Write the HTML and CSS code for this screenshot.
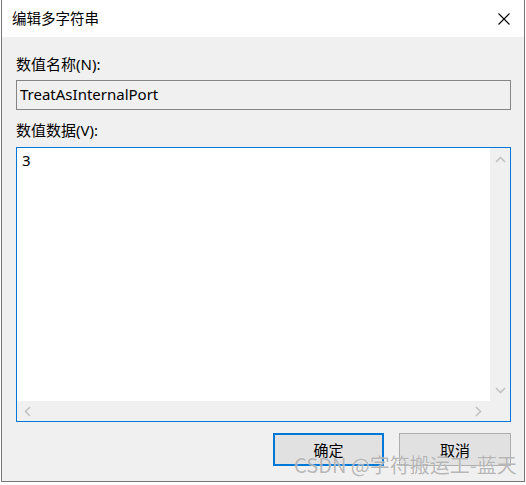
FILE: index.html
```html
<html>
  <head>
    <meta charset="utf-8">
    <link rel="stylesheet" href="styles.css">
    <title>编辑多字符串</title>
  </head>
  <body>
    <div class="window">
      <div class="titlebar">
        <span class="title">编辑多字符串</span>
        <svg class="close" width="12" height="12" viewBox="0 0 12 12">
          <path d="M0.5 0.5 L11.5 11.5 M11.5 0.5 L0.5 11.5" stroke="#000" stroke-width="1.1" fill="none"/>
        </svg>
      </div>

      <div class="content">
        <div class="label label-first">数值名称(N):</div>
        <div class="name-box">TreatAsInternalPort</div>

        <div class="label">数值数据(V):</div>
        <div class="memo">
          <div class="memo-text">3</div>
          <div class="vscroll">
            <svg width="11" height="7" viewBox="0 0 11 7"><polyline points="1,6 5.5,1.5 10,6" fill="none" stroke="#c2c2c2" stroke-width="1.6"/></svg>
            <svg width="11" height="7" viewBox="0 0 11 7"><polyline points="1,1 5.5,5.5 10,1" fill="none" stroke="#c2c2c2" stroke-width="1.6"/></svg>
          </div>
          <div class="hscroll">
            <svg width="7" height="11" viewBox="0 0 7 11"><polyline points="6,1 1.5,5.5 6,10" fill="none" stroke="#c2c2c2" stroke-width="1.6"/></svg>
            <svg width="7" height="11" viewBox="0 0 7 11"><polyline points="1,1 5.5,5.5 1,10" fill="none" stroke="#c2c2c2" stroke-width="1.6"/></svg>
          </div>
          <div class="corner"></div>
        </div>

        <div class="buttons">
          <div class="btn btn-default">确定</div>
          <div class="btn">取消</div>
        </div>
      </div>

      <div class="watermark">CSDN @字符搬运工-蓝天</div>
    </div>
  </body>
</html>
```

FILE: styles.css
```css
body {
  margin: 0;
  background-color: #fff;
  font-family: "Noto Sans", "Noto Sans CJK SC", sans-serif;
  font-size: 15px;
  color: #000;
}
.window {
  position: relative;
  box-sizing: border-box;
  width: 524px;
  height: 482px;
  margin-left: 1px;
  display: flex;
  flex-direction: column;
  border: 1px solid #777;
  border-top: none;
  background-color: #f0f0f0;
}
.titlebar {
  height: 37px;
  flex: none;
  display: flex;
  align-items: center;
  justify-content: space-between;
  padding: 0 14px 0 10px;
  background-color: #fff;
}
.title {
  font-family: "Noto Sans CJK SC", sans-serif;
  font-size: 14.5px;
  line-height: 20px;
  margin-top: -1px;
}
.close {
  display: block;
}
.content {
  flex: 1;
  display: flex;
  flex-direction: column;
  padding: 0 13px 0 14px;
}
.label {
  height: 20px;
  line-height: 20px;
  margin-top: 10px;
  font-family: "Noto Sans", "Noto Sans CJK SC", sans-serif;
}
.label-first {
  margin-top: 17px;
}
.name-box {
  box-sizing: border-box;
  height: 30px;
  margin-top: 6px;
  padding: 0 0 2px 3px;
  line-height: 26px;
  border: 1px solid #858585;
  background-color: #f0f0f0;
}
.memo {
  box-sizing: border-box;
  height: 275px;
  margin-top: 7px;
  display: grid;
  grid-template-columns: 1fr 20px;
  grid-template-rows: 1fr 20px;
  border: 1px solid #0078d7;
  background-color: #fff;
}
.memo-text {
  padding: 2px 5px;
  line-height: 20px;
}
.vscroll {
  display: flex;
  flex-direction: column;
  justify-content: space-between;
  align-items: center;
  padding: 8px 0 7px;
  background-color: #f0f0f0;
}
.hscroll {
  display: flex;
  justify-content: space-between;
  align-items: center;
  padding: 0 8px 0 7px;
  background-color: #f0f0f0;
}
.corner {
  background-color: #f0f0f0;
}
.vscroll svg,
.hscroll svg {
  display: block;
}
.buttons {
  display: flex;
  justify-content: flex-end;
  gap: 15px;
  margin-top: 11px;
}
.btn {
  box-sizing: border-box;
  width: 112px;
  height: 33px;
  line-height: 31px;
  text-align: center;
  font-family: "Noto Sans CJK SC", sans-serif;
  border: 1px solid #adadad;
  background-color: #e1e1e1;
}
.btn-default {
  width: 111px;
  line-height: 29px;
  border: 2px solid #0078d7;
}
.watermark {
  position: absolute;
  left: 292px;
  top: 452px;
  font-family: "Noto Sans CJK SC", sans-serif;
  font-size: 20px;
  line-height: 26px;
  color: rgba(160, 160, 160, 0.75);
  text-shadow: 0 0 1px rgba(255, 255, 255, 0.8);
  white-space: nowrap;
}
```
